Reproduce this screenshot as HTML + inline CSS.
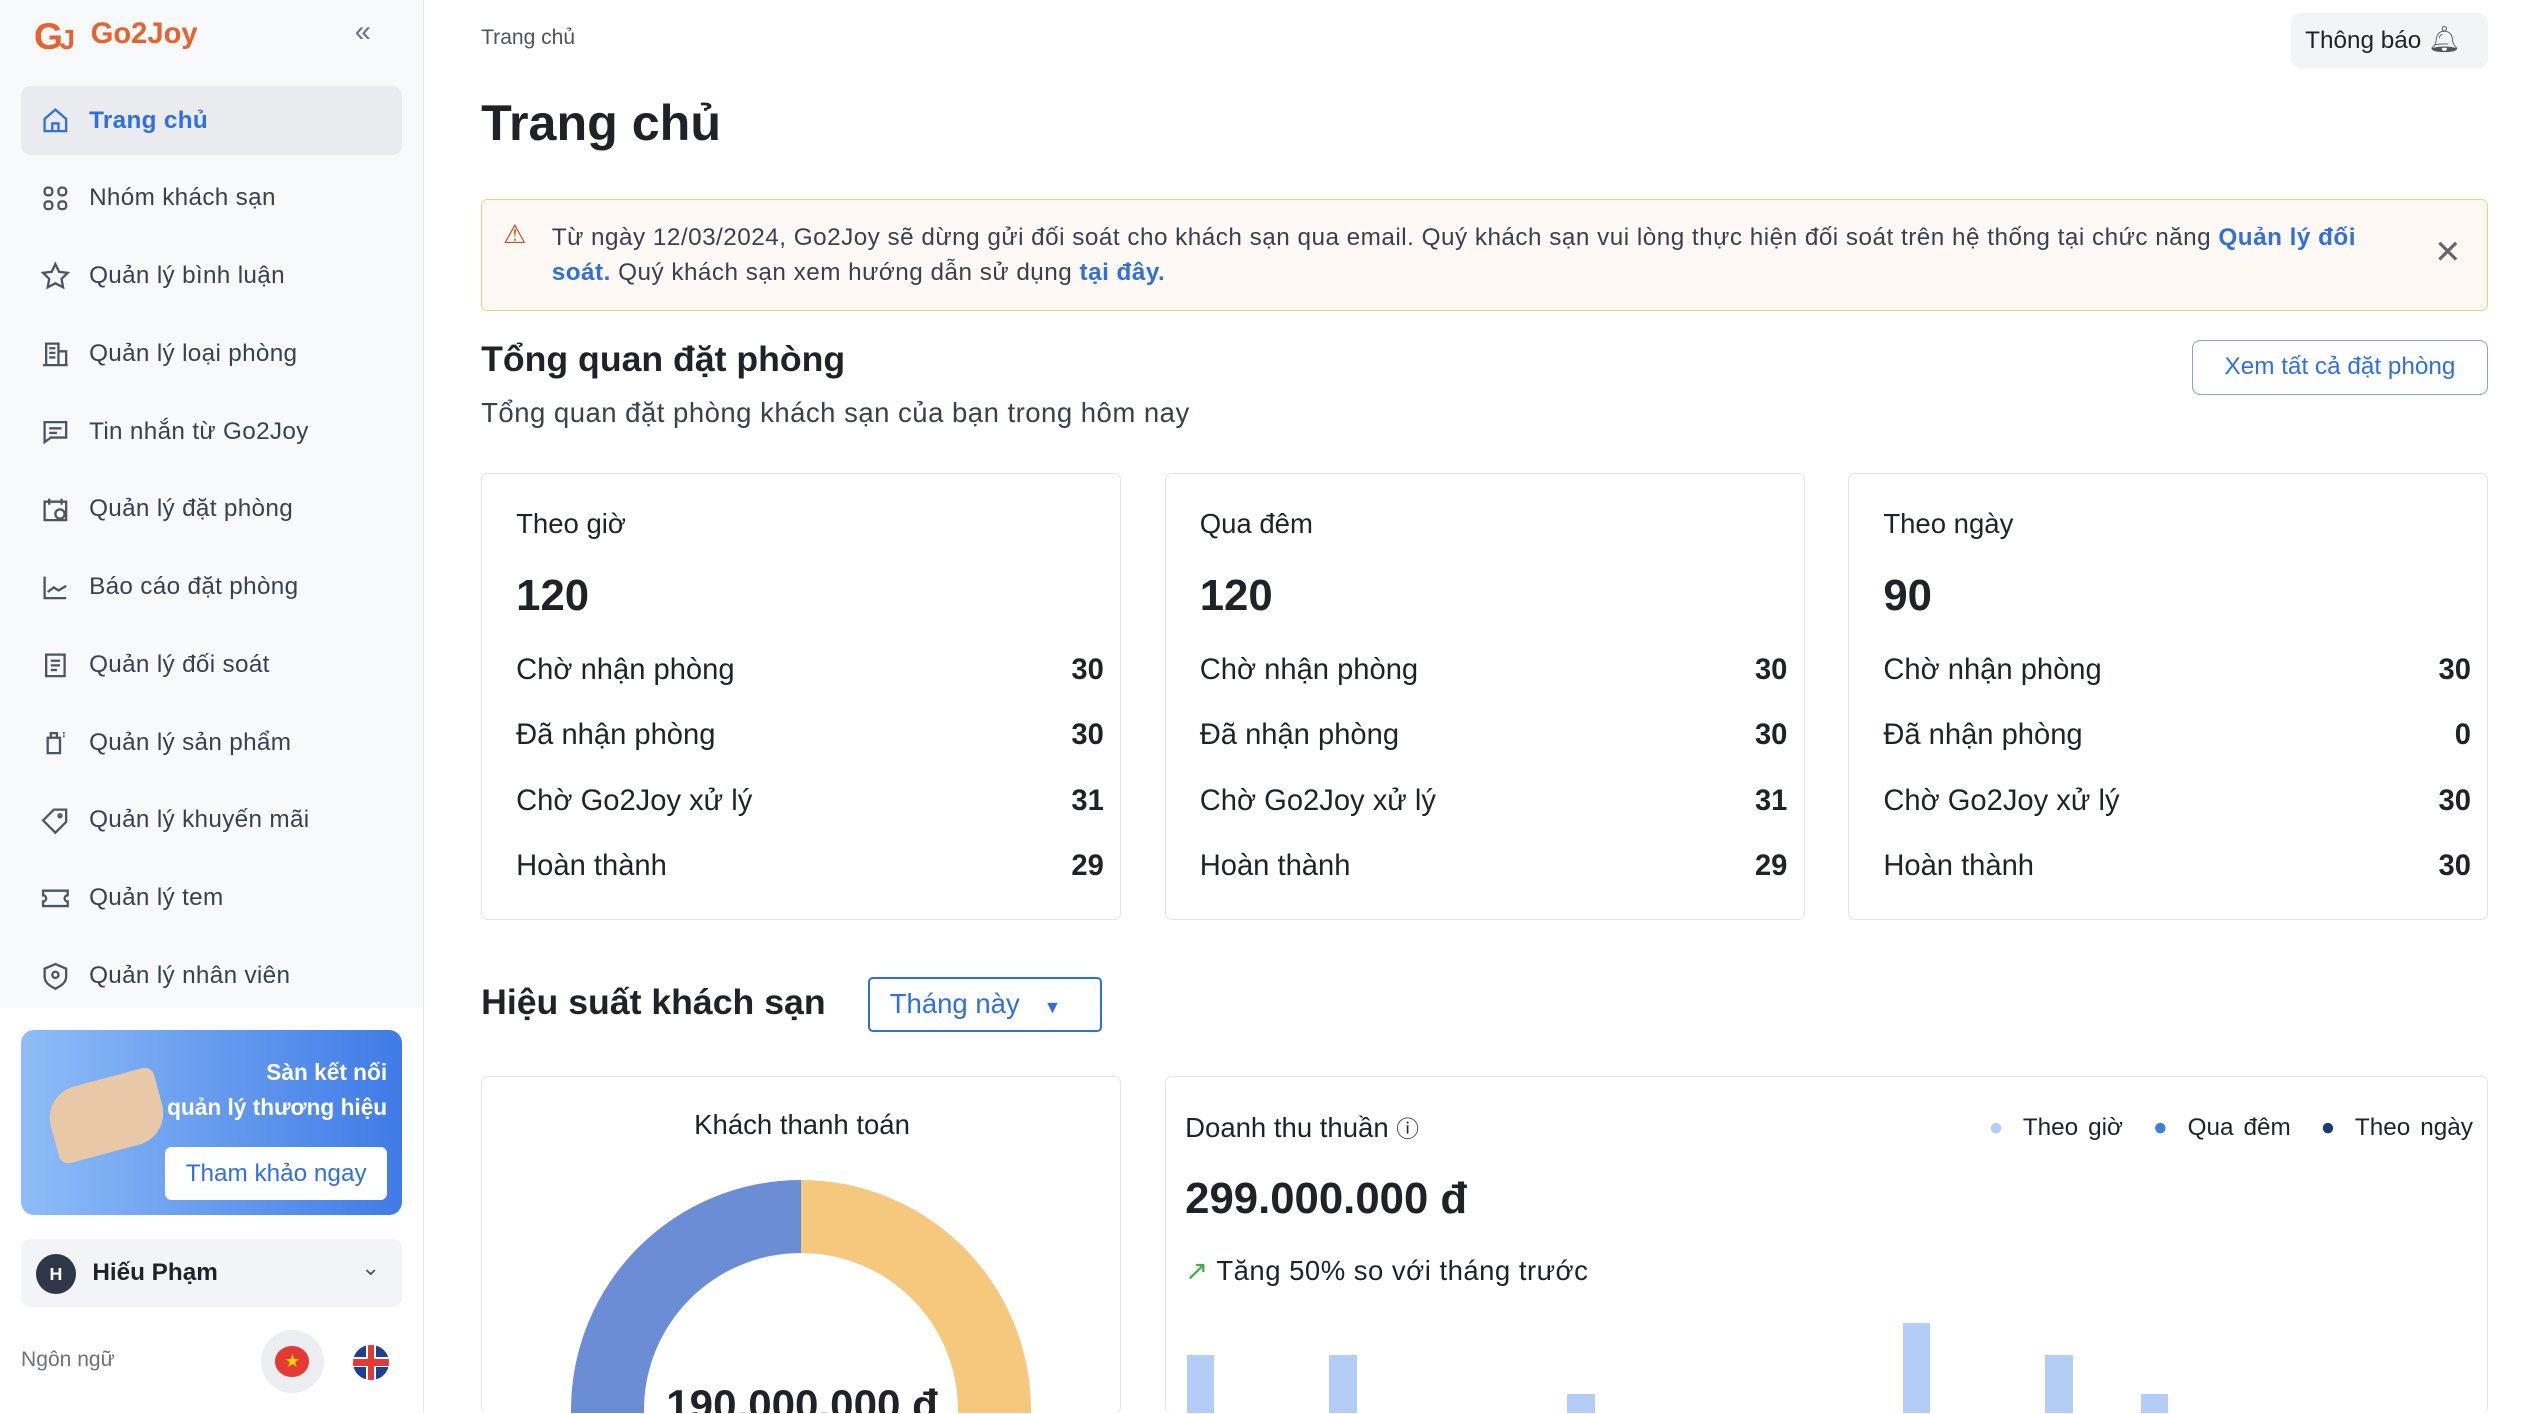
<!DOCTYPE html>
<html><head><meta charset="utf-8"><style>
*{box-sizing:border-box;margin:0;padding:0}
html,body{width:2540px;height:1414px;overflow:hidden;background:#fff}
#r{zoom:1.6199;width:1568px;height:872px;position:relative;font-family:"Liberation Sans",sans-serif;color:#1f2329;overflow:hidden}
.a{position:absolute}
.side{left:0;top:0;width:262px;height:872px;border-right:1px solid #e5e7eb}
.nav{left:13px;width:235px;height:43px;display:flex;align-items:center;padding-left:12px;font-size:15px;color:#374151;letter-spacing:0.2px}
.nav svg{width:19px;height:19px;margin-right:11px;stroke:#4b5563;fill:none;stroke-width:1.5}
.card{border:1px solid #e1e4e8;border-radius:4px;background:#fff}
.row{display:flex;justify-content:space-between;font-size:18px;position:absolute;left:21px;right:10px}
.row b{font-weight:600}
</style></head><body><div id="r">
<div class="a side">
 <div class="a" style="left:0;top:0;width:261px;height:622px;background:#f8f9fb"></div>
 <div class="a" style="left:21px;top:9px;font-size:23px;font-weight:800;color:#e8622f;letter-spacing:-2px">G<span style="font-size:17px">J</span></div>
 <div class="a" style="left:56px;top:11px;font-size:18px;font-weight:700;color:#e8622f">Go2Joy</div>
 <div class="a" style="left:219px;top:10px;font-size:18px;color:#6b7280">«</div>
 <div class="a nav" style="top:53px;background:#e9ebef;border-radius:6px;color:#2f6fe0;font-weight:600"><svg viewBox="0 0 20 20" style="stroke:#2f6fe0"><path d="M3 9l7-6 7 6v8H3z M8 17v-5h4v5"/></svg>Trang chủ</div>
 <div class="a nav" style="top:101px"><svg viewBox="0 0 20 20"><rect x="3" y="3" width="5" height="5" rx="2"/><rect x="12" y="3" width="5" height="5" rx="2"/><rect x="3" y="12" width="5" height="5" rx="2"/><rect x="12" y="12" width="5" height="5" rx="2"/></svg>Nhóm khách sạn</div>
 <div class="a nav" style="top:149px"><svg viewBox="0 0 20 20"><path d="M10 2l2.4 5 5.6.7-4 3.9 1 5.5L10 14.5 5 17.1l1-5.5-4-3.9L7.6 7z"/></svg>Quản lý bình luận</div>
 <div class="a nav" style="top:197px"><svg viewBox="0 0 20 20"><path d="M2 17h16M4 17V3h8v14M12 8h5v9M6 6h4M6 9h4M6 12h4"/></svg>Quản lý loại phòng</div>
 <div class="a nav" style="top:245px"><svg viewBox="0 0 20 20"><path d="M3 4h14v10H7l-4 3z M6 8h8M6 11h5"/></svg>Tin nhắn từ Go2Joy</div>
 <div class="a nav" style="top:293px"><svg viewBox="0 0 20 20"><path d="M3 5h14v12H3z M6 3v4M14 3v4"/><circle cx="13" cy="13" r="3"/></svg>Quản lý đặt phòng</div>
 <div class="a nav" style="top:341px"><svg viewBox="0 0 20 20"><path d="M3 3v14h14M5 13l4-3 3 2 5-3"/></svg>Báo cáo đặt phòng</div>
 <div class="a nav" style="top:389px"><svg viewBox="0 0 20 20"><path d="M4 3h12v14H4z M7 7h6M7 10h6M7 13h4"/></svg>Quản lý đối soát</div>
 <div class="a nav" style="top:437px"><svg viewBox="0 0 20 20"><path d="M5 7h8v10H5z M7 7V4h4v3M15 4h1M15 6h1"/></svg>Quản lý sản phẩm</div>
 <div class="a nav" style="top:485px"><svg viewBox="0 0 20 20"><path d="M2 10l7-7h8v8l-7 7z"/><circle cx="13" cy="7" r="1"/></svg>Quản lý khuyến mãi</div>
 <div class="a nav" style="top:533px"><svg viewBox="0 0 20 20"><path d="M2 5h16v3a2 2 0 000 4v3H2v-3a2 2 0 000-4z"/></svg>Quản lý tem</div>
 <div class="a nav" style="top:581px"><svg viewBox="0 0 20 20"><path d="M10 2l7 3v5c0 4-3 6-7 8-4-2-7-4-7-8V5z"/><circle cx="10" cy="9" r="2"/></svg>Quản lý nhân viên</div>
 <div class="a" style="left:13px;top:636px;width:235px;height:114px;border-radius:8px;background:linear-gradient(90deg,#8ebdf7,#3f7be6)">
  <div class="a" style="left:18px;top:30px;width:70px;height:45px;background:#e8c8a6;border-radius:20px 6px 20px 6px;transform:rotate(-15deg)"></div>
  <div class="a" style="right:9px;top:15px;color:#fff;font-size:14px;font-weight:600;text-align:right;line-height:22px">Sàn kết nối<br>quản lý thương hiệu</div>
  <div class="a" style="left:89px;top:72px;width:137px;height:33px;background:#fff;border-radius:4px;color:#2f6fe0;font-size:15px;text-align:center;line-height:33px">Tham khảo ngay</div>
 </div>
 <div class="a" style="left:13px;top:765px;width:235px;height:42px;background:#f3f4f6;border-radius:6px">
  <div class="a" style="left:9px;top:9px;width:25px;height:25px;border-radius:50%;background:#2d3748;color:#fff;font-size:11px;font-weight:700;text-align:center;line-height:25px">H</div>
  <div class="a" style="left:44px;top:12px;font-size:15px;font-weight:700">Hiếu Phạm</div>
  <div class="a" style="left:210px;top:9px;font-size:14px;color:#555">⌄</div>
 </div>
 <div class="a" style="left:13px;top:832px;font-size:13px;color:#6b7280">Ngôn ngữ</div>
 <div class="a" style="left:161px;top:821px;width:39px;height:39px;border-radius:50%;background:#eceef1"><div class="a" style="left:9px;top:10px;width:21px;height:19px;border-radius:50%;background:#e53935;color:#ffd700;font-size:11px;text-align:center;line-height:19px">★</div></div>
 <div class="a" style="left:218px;top:830px;width:22px;height:22px;border-radius:50%;background:#1f3f8f;overflow:hidden"><div class="a" style="left:8px;top:0;width:6px;height:22px;background:#fff"></div><div class="a" style="left:0;top:8px;width:22px;height:6px;background:#fff"></div><div class="a" style="left:9px;top:0;width:4px;height:22px;background:#e53935"></div><div class="a" style="left:0;top:9px;width:22px;height:4px;background:#e53935"></div></div>
</div>
<div class="a" style="left:297px;top:16px;font-size:13px;color:#4b5563">Trang chủ</div>
<div class="a" style="left:1414px;top:8px;width:122px;height:34px;background:#f3f4f6;border-radius:6px;font-size:15px;line-height:34px;padding-left:9px">Thông báo <span style="font-size:16px;color:#555">🔔︎</span></div>
<div class="a" style="left:297px;top:58px;font-size:31px;font-weight:700">Trang chủ</div>
<div class="a" style="left:297px;top:123px;width:1239px;height:69px;background:#fff9f6;border:1px solid #f3cf7c;border-radius:4px">
 <div class="a" style="left:13px;top:12px;color:#c0532a;font-size:16px">⚠</div>
 <div class="a" style="left:43px;top:12px;width:1150px;font-size:15px;line-height:22px;color:#374151;letter-spacing:0.3px">Từ ngày 12/03/2024, Go2Joy sẽ dừng gửi đối soát cho khách sạn qua email. Quý khách sạn vui lòng thực hiện đối soát trên hệ thống tại chức năng <b style="color:#2f6fe0">Quản lý đối soát.</b> Quý khách sạn xem hướng dẫn sử dụng <b style="color:#2f6fe0">tại đây.</b></div>
 <div class="a" style="left:1205px;top:20px;font-size:20px;color:#666">✕</div>
</div>
<div class="a" style="left:297px;top:209px;font-size:22px;font-weight:600">Tổng quan đặt phòng</div>
<div class="a" style="left:297px;top:245px;font-size:17px;color:#374151;letter-spacing:0.3px">Tổng quan đặt phòng khách sạn của bạn trong hôm nay</div>
<div class="a" style="left:1353px;top:210px;width:183px;height:34px;border:1px solid #7aa7f0;border-radius:5px;color:#2f6fe0;font-size:15px;text-align:center;line-height:32px">Xem tất cả đặt phòng</div>

<div class="a card" style="left:297px;top:292px;width:395px;height:276px">
 <div class="a" style="left:21px;top:21px;font-size:17px">Theo giờ</div>
 <div class="a" style="left:21px;top:60px;font-size:27px;font-weight:600">120</div>
 <div class="row" style="top:111px"><span>Chờ nhận phòng</span><b>30</b></div>
 <div class="row" style="top:151px"><span>Đã nhận phòng</span><b>30</b></div>
 <div class="row" style="top:192px"><span>Chờ Go2Joy xử lý</span><b>31</b></div>
 <div class="row" style="top:232px"><span>Hoàn thành</span><b>29</b></div>
</div>
<div class="a card" style="left:719px;top:292px;width:395px;height:276px">
 <div class="a" style="left:21px;top:21px;font-size:17px">Qua đêm</div>
 <div class="a" style="left:21px;top:60px;font-size:27px;font-weight:600">120</div>
 <div class="row" style="top:111px"><span>Chờ nhận phòng</span><b>30</b></div>
 <div class="row" style="top:151px"><span>Đã nhận phòng</span><b>30</b></div>
 <div class="row" style="top:192px"><span>Chờ Go2Joy xử lý</span><b>31</b></div>
 <div class="row" style="top:232px"><span>Hoàn thành</span><b>29</b></div>
</div>
<div class="a card" style="left:1141px;top:292px;width:395px;height:276px">
 <div class="a" style="left:21px;top:21px;font-size:17px">Theo ngày</div>
 <div class="a" style="left:21px;top:60px;font-size:27px;font-weight:600">90</div>
 <div class="row" style="top:111px"><span>Chờ nhận phòng</span><b>30</b></div>
 <div class="row" style="top:151px"><span>Đã nhận phòng</span><b>0</b></div>
 <div class="row" style="top:192px"><span>Chờ Go2Joy xử lý</span><b>30</b></div>
 <div class="row" style="top:232px"><span>Hoàn thành</span><b>30</b></div>
</div>

<div class="a" style="left:297px;top:606px;font-size:22px;font-weight:600">Hiệu suất khách sạn</div>
<div class="a" style="left:536px;top:603px;width:144px;height:34px;border:1.5px solid #2f6fe0;border-radius:3px;color:#2f6fe0;font-size:17px;line-height:31px;padding-left:12px">Tháng này <span style="font-size:11px;margin-left:10px">▼</span></div>

<div class="a card" style="left:297px;top:664px;width:395px;height:208px;overflow:hidden;border-bottom:none">
 <div class="a" style="left:0;width:395px;top:20px;font-size:17px;text-align:center">Khách thanh toán</div>
 <div class="a" style="left:55px;top:64px;width:284px;height:284px;border-radius:50%;background:linear-gradient(90deg,#6b8dd6 50%,#f5c87e 50%)"></div>
 <div class="a" style="left:100px;top:109px;width:194px;height:194px;border-radius:50%;background:#fff"></div>
 <div class="a" style="left:0;width:395px;top:188px;font-size:26px;font-weight:700;text-align:center">190.000.000 đ</div>
</div>
<div class="a card" style="left:719px;top:664px;width:817px;height:208px;overflow:hidden;border-bottom:none">
 <div class="a" style="left:12px;top:21px;font-size:17px">Doanh thu thuần <span style="font-size:14px">ⓘ</span></div>
 <div class="a" style="left:508px;top:23px;font-size:15px;word-spacing:2px"><span style="color:#b3cdf7">●</span>&nbsp; Theo giờ &nbsp;&nbsp;<span style="color:#3f7fd9">●</span>&nbsp; Qua đêm &nbsp;&nbsp;<span style="color:#1f3a6e">●</span>&nbsp; Theo ngày</div>
 <div class="a" style="left:12px;top:60px;font-size:27px;font-weight:700">299.000.000 đ</div>
 <div class="a" style="left:12px;top:110px;font-size:17px;letter-spacing:0.3px"><span style="color:#3cb043">↗</span> Tăng 50% so với tháng trước</div>
 <div class="a" style="left:13px;top:172px;width:17px;height:60px;background:#b3cdf7"></div>
 <div class="a" style="left:101px;top:172px;width:17px;height:60px;background:#b3cdf7"></div>
 <div class="a" style="left:248px;top:196px;width:17px;height:40px;background:#b3cdf7"></div>
 <div class="a" style="left:455px;top:152px;width:17px;height:80px;background:#b3cdf7"></div>
 <div class="a" style="left:543px;top:172px;width:17px;height:60px;background:#b3cdf7"></div>
 <div class="a" style="left:602px;top:196px;width:17px;height:40px;background:#b3cdf7"></div>
</div>
</div></body></html>
